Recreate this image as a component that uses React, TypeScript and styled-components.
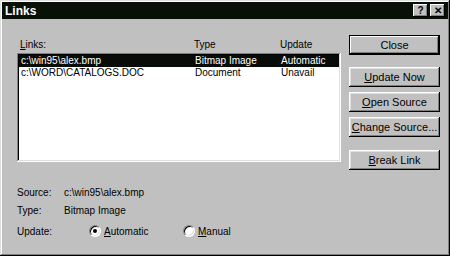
import styled, { createGlobalStyle } from 'styled-components';

const GlobalStyle = createGlobalStyle`
  html, body {
    margin: 0;
    padding: 0;
    background: #c0c0c0;
  }
  * {
    box-sizing: border-box;
  }
`;

const Window = styled.div`
  width: 450px;
  height: 256px;
  background: #c0c0c0;
  padding: 2px;
  box-shadow: inset -1px -1px #000, inset 1px 1px #dfdfdf, inset -2px -2px #808080, inset 2px 2px #fff;
  font-family: 'Liberation Sans', Arial, sans-serif;
  font-size: 10px;
  color: #000;
  display: flex;
  flex-direction: column;
`;

const TitleBar = styled.div`
  height: 17px;
  background: #081008;
  display: flex;
  align-items: center;
  justify-content: space-between;
  padding: 0 3px 0 3px;
`;

const Title = styled.span`
  color: #fff;
  font-weight: bold;
  font-size: 12px;
`;

const TitleButtons = styled.div`
  display: flex;
  gap: 2px;
`;

const TitleButton = styled.div`
  width: 15px;
  height: 13px;
  background: #c0c0c0;
  box-shadow: inset -1px -1px #000, inset 1px 1px #fff, inset -2px -2px #808080;
  display: flex;
  align-items: center;
  justify-content: center;
  font-weight: bold;
  font-size: 10px;
  line-height: 1;
  color: #000;
`;

const Body = styled.div`
  flex: 1;
  display: flex;
  flex-direction: column;
  padding: 16px 8px 0 15px;
`;

const Top = styled.div`
  display: flex;
  gap: 8px;
`;

const LeftCol = styled.div`
  width: 324px;
  display: flex;
  flex-direction: column;
`;

const Headers = styled.div`
  height: 18px;
  display: grid;
  grid-template-columns: 174px 86px 1fr;
  padding-left: 3px;
  align-items: center;
`;

const ListBox = styled.div`
  height: 109px;
  background: #fff;
  padding: 2px;
  box-shadow: inset -1px -1px #fff, inset 1px 1px #808080, inset -2px -2px #dfdfdf, inset 2px 2px #000;
`;

const Row = styled.div<{ $selected?: boolean }>`
  height: 12px;
  display: grid;
  grid-template-columns: 174px 86px 1fr;
  align-items: center;
  padding-left: 2px;
  line-height: 12px;
  white-space: nowrap;
  background: ${(p) => (p.$selected ? '#080c08' : 'transparent')};
  color: ${(p) => (p.$selected ? '#fff' : '#000')};
`;

const ButtonCol = styled.div`
  width: 91px;
  display: flex;
  flex-direction: column;
`;

const Button = styled.div<{ $default?: boolean; $gap?: number }>`
  height: 20px;
  margin-top: ${(p) => p.$gap ?? 0}px;
  display: flex;
  align-items: center;
  justify-content: center;
  font-size: 11px;
  background: #c0c0c0;
  box-shadow: ${(p) =>
    p.$default
      ? 'inset -1px -1px #000, inset 1px 1px #000, inset -2px -2px #000, inset 2px 2px #fff, inset -3px -3px #808080'
      : 'inset -1px -1px #000, inset 1px 1px #fff, inset -2px -2px #808080, inset 2px 2px #dfdfdf'};
`;

const U = styled.span`
  text-decoration: underline;
`;

const Details = styled.div`
  margin-top: 13px;
  display: flex;
  flex-direction: column;
`;

const DetailRow = styled.div<{ $h: number }>`
  height: ${(p) => p.$h}px;
  display: grid;
  grid-template-columns: 47px 1fr;
  align-items: center;
`;

const RadioRow = styled.div`
  display: flex;
  align-items: center;
  padding-left: 25px;
`;

const RadioItem = styled.label`
  width: 94px;
  display: flex;
  align-items: center;
  gap: 3px;
`;

const RadioCircle = styled.span<{ $checked?: boolean }>`
  width: 12px;
  height: 12px;
  border-radius: 50%;
  background: #fff;
  border: 1px solid;
  border-color: #808080 #fff #fff #808080;
  box-shadow: inset 1px 1px #000, inset -1px -1px #dfdfdf;
  display: flex;
  align-items: center;
  justify-content: center;
  &::after {
    content: '';
    width: 4px;
    height: 4px;
    border-radius: 50%;
    background: #000;
    display: ${(p) => (p.$checked ? 'block' : 'none')};
  }
`;

const links = [
  { path: 'c:\\win95\\alex.bmp', type: 'Bitmap Image', update: 'Automatic' },
  { path: 'c:\\WORD\\CATALOGS.DOC', type: 'Document', update: 'Unavail' },
];

export default function App() {
  return (
    <>
      <GlobalStyle />
      <Window>
        <TitleBar>
          <Title>Links</Title>
          <TitleButtons>
            <TitleButton>?</TitleButton>
            <TitleButton>✕</TitleButton>
          </TitleButtons>
        </TitleBar>
        <Body>
          <Top>
            <LeftCol>
              <Headers>
                <span>
                  <U>L</U>inks:
                </span>
                <span>Type</span>
                <span>Update</span>
              </Headers>
              <ListBox>
                {links.map((l, i) => (
                  <Row key={l.path} $selected={i === 0}>
                    <span>{l.path}</span>
                    <span>{l.type}</span>
                    <span>{l.update}</span>
                  </Row>
                ))}
              </ListBox>
            </LeftCol>
            <ButtonCol>
              <Button $default>Close</Button>
              <Button $gap={12}>
                <U>U</U>pdate Now
              </Button>
              <Button $gap={5}>
                <U>O</U>pen Source
              </Button>
              <Button $gap={5}>
                <U>C</U>hange Source...
              </Button>
              <Button $gap={13}>
                <U>B</U>reak Link
              </Button>
            </ButtonCol>
          </Top>
          <Details>
            <DetailRow $h={18}>
              <span>Source:</span>
              <span>c:\win95\alex.bmp</span>
            </DetailRow>
            <DetailRow $h={18}>
              <span>Type:</span>
              <span>Bitmap Image</span>
            </DetailRow>
            <DetailRow $h={24}>
              <span>Update:</span>
              <RadioRow>
                <RadioItem>
                  <RadioCircle $checked />
                  <span>
                    <U>A</U>utomatic
                  </span>
                </RadioItem>
                <RadioItem>
                  <RadioCircle />
                  <span>
                    <U>M</U>anual
                  </span>
                </RadioItem>
              </RadioRow>
            </DetailRow>
          </Details>
        </Body>
      </Window>
    </>
  );
}
